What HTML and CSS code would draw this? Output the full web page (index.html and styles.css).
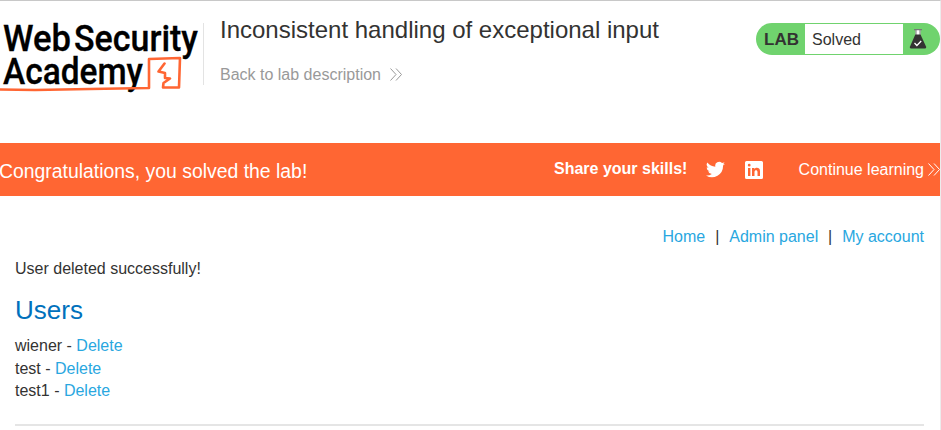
FILE: index.html
```html
<!DOCTYPE html>
<html lang="en">
<head>
<meta charset="utf-8">
<title>Inconsistent handling of exceptional input</title>
<link rel="stylesheet" href="styles.css">
</head>
<body>
<div class="page">
  <header class="lab-header">
    <svg class="logo" width="203" height="75" viewBox="0 20 203 75" role="img">
      <g class="logo-text">
        <text x="3" y="51" textLength="68" lengthAdjust="spacingAndGlyphs">Web</text>
        <text x="74" y="51" textLength="124" lengthAdjust="spacingAndGlyphs">Security</text>
        <text x="3" y="83.500" textLength="140" lengthAdjust="spacingAndGlyphs">Academy</text>
      </g>
      <g class="logo-mark">
        <path d="M0 89.500L35 90L90 89L149 88L149 59L180 58L179 87.500L163 87.500L163.500 83L170 78.500L165 78L165 73L158.500 71.500L164.500 63.500"/>
      </g>
    </svg>
    <div class="title">
      <h1>Inconsistent handling of exceptional input</h1>
      <a class="back" href="#"><span>Back to lab description</span>
        <svg width="12" height="13" viewBox="0 0 12 13"><path d="M.5.5L6 6.500L.5 12.500M6 .5L11.500 6.500L6 12.500"/></svg>
      </a>
    </div>
    <div class="status">
      <b>LAB</b>
      <p>Solved</p>
      <svg width="18" height="22" viewBox="0 0 18 22">
        <path fill="#fff" d="M6.500 2h5v5h-5z"/>
        <path fill="#777" d="M5 1h8v1.200h-1.500V7h-1V2.200h-3V7h-1V2.200H5z"/>
        <path fill="#333332" d="M6.300 6.500h5.200L17 18.500q.8 2-1 2H2q-1.800 0-1-2z"/>
        <path fill="none" stroke="#fff" stroke-width="1.300" d="M5.500 15l2.400 2.500 4.300-4.500"/>
      </svg>
    </div>
  </header>
  <section class="banner">
    <h4>Congratulations, you solved the lab!</h4>
    <b>Share your skills!</b>
    <svg class="twitter" width="19" height="17" viewBox="0 2 24 20"><path d="M24 4.600a10 10 0 0 1-2.800.8 5 5 0 0 0 2.100-2.700 10 10 0 0 1-3.100 1.200A4.900 4.900 0 0 0 11.800 8.400 14 14 0 0 1 1.700 3.200a4.900 4.900 0 0 0 1.500 6.600 5 5 0 0 1-2.200-.6 4.900 4.900 0 0 0 3.900 4.900 5 5 0 0 1-2.200.1 4.900 4.900 0 0 0 4.600 3.400A10 10 0 0 1 0 19.500 14 14 0 0 0 21.500 7.100 10 10 0 0 0 24 4.600z"/></svg>
    <svg class="linkedin" width="18" height="18" viewBox="0 0 18 18"><path fill-rule="evenodd" d="M1.500 0h15A1.500 1.500 0 0 1 18 1.500v15a1.500 1.500 0 0 1-1.500 1.500h-15A1.500 1.500 0 0 1 0 16.500v-15A1.500 1.500 0 0 1 1.500 0zM3 7v8h2.400V7zM4.200 2.800a1.400 1.400 0 1 0 0 2.800 1.400 1.400 0 0 0 0-2.800zM7 7v8h2.500v-4c0-2.500 3-2.500 3 0v4H15v-4.800c0-3.800-4.200-4.200-5.600-2V7z"/></svg>
    <a href="#"><span>Continue learning</span>
      <svg class="more" width="12" height="13" viewBox="0 0 12 13"><path d="M.5.5L6 6.500L.5 12.500M6 .5L11.500 6.500L6 12.500"/></svg>
    </a>
  </section>
  <main>
    <nav><a href="#">Home</a><i>|</i><a href="#">Admin panel</a><i>|</i><a href="#">My account</a></nav>
    <p class="message">User deleted successfully!</p>
    <h2>Users</h2>
    <ul>
      <li>wiener - <a href="#">Delete</a></li>
      <li>test - <a href="#">Delete</a></li>
      <li>test1 - <a href="#">Delete</a></li>
    </ul>
    <hr>
  </main>
</div>
</body>
</html>
```
FILE: styles.css
```css
* { box-sizing: border-box; margin: 0; padding: 0; }
body { background: #fff; color: #333332; font: 16px/22.500px "Liberation Sans", Arial, sans-serif; overflow: hidden; }
a { color: #29a7df; text-decoration: none; }
svg { flex: none; }
.page { width: 941px; height: 430px; border-top: 1px solid #c8c8c8; border-right: 1px solid #ececec; }
.lab-header { height: 142px; display: flex; align-items: flex-start; }
.logo { margin-top: 19px; overflow: visible; }
.logo-text { font: 500 37.500px Roboto, sans-serif; fill: #000; stroke: #000; stroke-width: .3; }
.logo-mark path { fill: none; stroke: #ff6633; stroke-width: 2.600; stroke-linejoin: round; stroke-linecap: round; }
.title { margin-top: 22px; height: 62px; border-left: 1px solid #e3e3e3; padding-left: 16px; }
h1 { font-size: 24px; font-weight: 400; line-height: 28px; margin-top: -7px; white-space: nowrap; }
.back { display: flex; align-items: center; gap: 9px; color: #999; margin-top: 19px; }
.back span { padding-top: 1px; }
.back path, .more path { fill: none; stroke: currentColor; stroke-width: 1; }
.status { margin: 22px 0 0 auto; width: 184px; height: 32px; border-radius: 16px; background: #70d36e; display: flex; align-items: center; }
.status b { width: 49px; padding: 2px 0 0 8px; font-size: 17px; }
.status p { width: 98px; height: 30px; padding-left: 7px; background: #fff; line-height: 31px; }
.status svg { margin-left: 6px; }
.banner { height: 53px; background: #ff6633; color: #fff; display: flex; align-items: center; }
.banner h4 { width: 554px; font-size: 19.400px; font-weight: 400; padding-top: 3px; margin-left: -1px; }
.banner b { width: 153px; margin: 0 0 0 1px; }
.banner svg { fill: #fff; }
.twitter { margin-left: -1px; }
.linkedin { margin-left: 20px; }
.banner a { color: #fff; display: flex; align-items: center; gap: 4px; margin-left: auto; white-space: nowrap; }
.banner a span { padding-top: 2px; }
main { padding: 30px 16px 0 15px; }
nav { display: flex; justify-content: flex-end; }
nav i { font-style: normal; width: 24px; text-align: center; }
.message { margin-top: 9px; }
h2 { color: #0071bc; font-size: 26px; font-weight: 400; line-height: 32px; margin: 14px 0 9px; }
ul { list-style: none; }
hr { border: 0; height: 2px; background: #e5e5e5; margin-top: 21px; }
```
